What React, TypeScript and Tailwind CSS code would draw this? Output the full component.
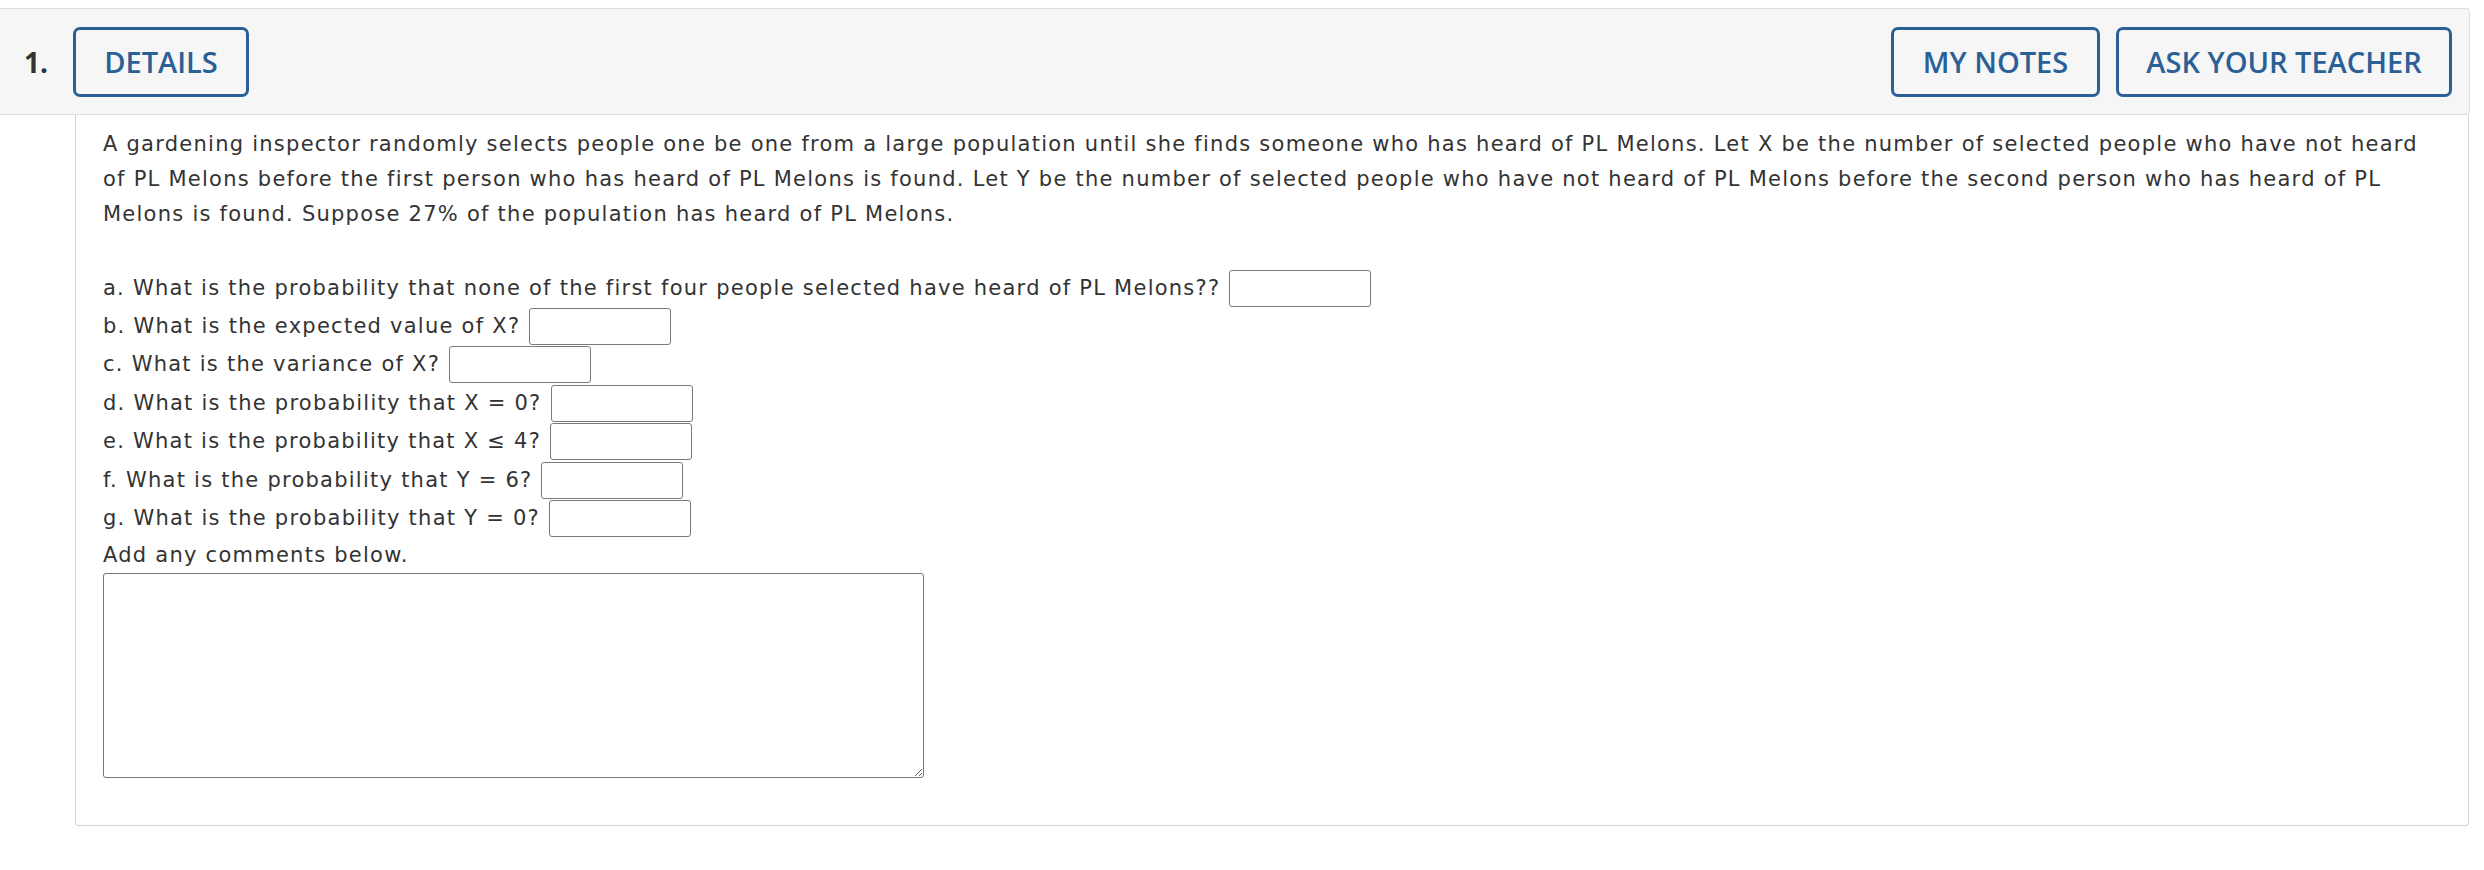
import React from "react";

const questions = [
  "a. What is the probability that none of the first four people selected have heard of PL Melons??",
  "b. What is the expected value of X?",
  "c. What is the variance of X?",
  "d. What is the probability that X = 0?",
  "e. What is the probability that X \u2264 4?",
  "f. What is the probability that Y = 6?",
  "g. What is the probability that Y = 0?",
];

function Btn({ label, w }: { label: string; w: string }) {
  return (
    <div
      className={`${w} h-[70px] flex items-center justify-center border-[3px] border-[#2b6096] rounded-[7px] text-[#2b6096] font-['Open_Sans',sans-serif] font-semibold text-[29px] leading-none`}
    >
      {label}
    </div>
  );
}

export default function App() {
  return (
    <div className="w-[2484px] h-[870px] bg-white pt-[8px] overflow-hidden">
      <div className="w-[2470px] h-[107px] bg-[#f6f6f6] border-t border-b border-r border-[#dedede] rounded-tr-[4px] rounded-br-[4px] flex items-center pl-[24px] pr-[17px]">
        <div className="w-[49px] font-['Open_Sans',sans-serif] font-bold text-[28px] text-[#333333] leading-none">
          1.
        </div>
        <Btn label="DETAILS" w="w-[176px]" />
        <div className="flex-1" />
        <Btn label="MY NOTES" w="w-[209px]" />
        <div className="w-[16px]" />
        <Btn label="ASK YOUR TEACHER" w="w-[336px]" />
      </div>
      <div className="ml-[75px] w-[2394px] border-l border-r border-b border-[#d2d2d2] rounded-b-[4px] pl-[27px] pr-[40px] pt-[12px] pb-[47px] font-['DejaVu_Sans',Verdana,sans-serif] text-[21px] tracking-[1.25px] leading-[35px] text-[#333333]">
        <p>
          A gardening inspector randomly selects people one be one from a large population until she finds someone who has heard of PL Melons. Let X be the number of selected people who have not heard of PL Melons before the first person who has heard of PL Melons is found. Let Y be the number of selected people who have not heard of PL Melons before the second person who has heard of PL Melons is found. Suppose 27% of the population has heard of PL Melons.
        </p>
        <div className="mt-[37px]">
          {questions.map((q) => (
            <div key={q} className="h-[38.4px] flex items-center">
              <span>{q}</span>
              <input
                type="text"
                className="ml-[9px] w-[142px] h-[37px] border border-[#7a7a7a] rounded-[3px] bg-white"
              />
            </div>
          ))}
        </div>
        <div className="leading-[35px]">Add any comments below.</div>
        <textarea className="block w-[821px] h-[205px] border border-[#767676] rounded-[3px] bg-white" />
      </div>
    </div>
  );
}
